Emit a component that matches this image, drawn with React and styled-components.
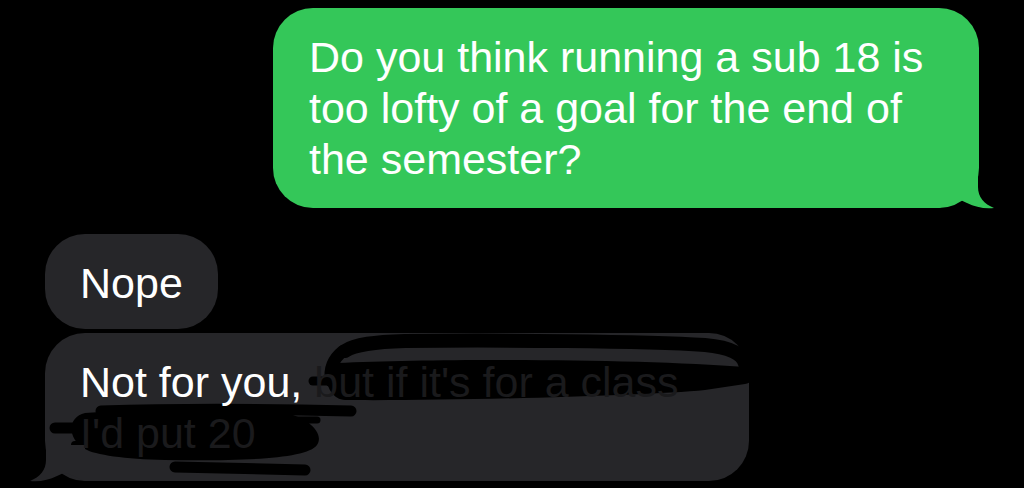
import React from 'react';
import styled, { createGlobalStyle } from 'styled-components';

// CSS
const GlobalStyle = createGlobalStyle`
  html, body {
    margin: 0;
    padding: 0;
    background: #000;
  }
  body {
    width: 1024px;
    height: 488px;
    overflow: hidden;
  }
`;

const Thread = styled.div`
  display: flex;
  flex-direction: column;
  padding: 8px 45px 0 45px;
  font-family: 'Liberation Sans', Arial, sans-serif;
  font-size: 43px;
  line-height: 51px;
  -webkit-font-smoothing: antialiased;
`;

const Bubble = styled.div`
  position: relative;
  box-sizing: border-box;
  align-self: ${({ $sent }) => ($sent ? 'flex-end' : 'flex-start')};
  width: ${({ $width }) => ($width ? `${$width}px` : 'auto')};
  margin-top: ${({ $gap }) => $gap || 0}px;
  padding: ${({ $pad }) => $pad};
  border-radius: 40px;
  background: ${({ $sent }) => ($sent ? '#34c759' : '#262629')};
  color: #fff;
  white-space: nowrap;
`;

const Tail = styled.svg`
  position: absolute;
  bottom: 0;
  width: 56px;
  height: 36px;
  overflow: visible;
  ${({ $side }) =>
    $side === 'right'
      ? 'right: -16px;'
      : 'left: -16px; transform: scaleX(-1);'}
`;

const Scribble = styled.svg`
  position: absolute;
  left: 0;
  top: 0;
  width: 704px;
  height: 148px;
  overflow: visible;
  pointer-events: none;
`;

const Text = styled.span`
  position: relative;
  z-index: 1;
`;

const Hidden = styled.span`
  color: #1a1a1c;
`;

// Bubble tail, drawn for the right side (mirrored for the left)
const BubbleTail = ({ side, color }) => (
  <Tail $side={side} viewBox="0 0 56 36">
    <path
      d="M39 0 L39 15 C39 25 45 32 55 36 C45 37 36 35 28 31 C25 29.5 22 28 20 28 C14 29 8 33 0 36 L0 0 Z"
      fill={color}
    />
  </Tail>
);

// Marker strokes over the redacted part
const MarkerScribble = () => (
  <Scribble viewBox="0 0 704 148">
    <g fill="none" stroke="#000" strokeLinecap="round" strokeLinejoin="round">
      {/* first line: loop over "but if it's for a class" */}
      <path d="M300 18 C310 11 330 9 360 8 C450 7 600 8 660 12 C684 14 698 21 700 31" strokeWidth="14" />
      <path d="M298 18 C288 26 284 36 286 48" strokeWidth="12" />
      <path d="M268 48 L284 48" strokeWidth="9" />
      <path d="M650 39 L700 40" strokeWidth="8" />
      {/* second line: over "I'd put 20" */}
      <path d="M56 78 C120 76 220 76 306 78" strokeWidth="11" />
      <path d="M10 95 L60 95" strokeWidth="11" />
      <path d="M236 87 L272 87" strokeWidth="7" />
      <path d="M30 112 L80 112" strokeWidth="8" />
      <path d="M130 134 C180 135 220 136 260 137" strokeWidth="11" />
    </g>
    <path
      d="M292 30 C400 25 600 26 700 34 C712 38 712 49 700 51 L660 57 C600 63 400 68 300 67 C280 66 276 35 292 30 Z"
      fill="#000"
    />
    <path
      d="M40 80 C100 76 200 76 240 80 C262 84 280 100 272 112 C262 126 200 128 120 127 C80 126 50 122 40 116 C22 106 22 84 40 80 Z"
      fill="#000"
    />
  </Scribble>
);

/* SCREEN */
function App() {
  return (
    <>
      <GlobalStyle />
      <Thread>
        <Bubble $sent $width={706} $pad="24px 40px 23px 36px">
          Do you think running a sub 18 is
          <br />
          too lofty of a goal for the end of
          <br />
          the semester?
          <BubbleTail side="right" color="#34c759" />
        </Bubble>

        <Bubble $gap={26} $pad="24px 35px 20px 35px">
          Nope
        </Bubble>

        <Bubble $gap={4} $width={704} $pad="24px 40px 22px 35px">
          <MarkerScribble />
          <Text>
            Not for you, <Hidden>but if it's for a class</Hidden>
            <br />
            <Hidden>I'd put 20</Hidden>
          </Text>
          <BubbleTail side="left" color="#262629" />
        </Bubble>
      </Thread>
    </>
  );
}

export default App;
